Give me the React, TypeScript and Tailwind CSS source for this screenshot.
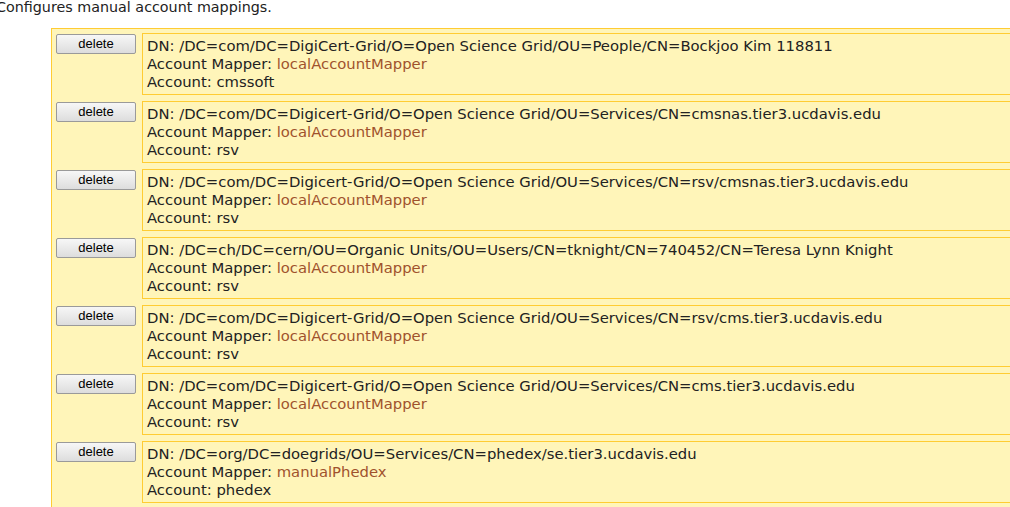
import React from 'react';

interface Mapping {
    dn: string;
    mapper: string;
    account: string;
}

const mappings: Mapping[] = [
    { dn: '/DC=com/DC=DigiCert-Grid/O=Open Science Grid/OU=People/CN=Bockjoo Kim 118811', mapper: 'localAccountMapper', account: 'cmssoft' },
    { dn: '/DC=com/DC=Digicert-Grid/O=Open Science Grid/OU=Services/CN=cmsnas.tier3.ucdavis.edu', mapper: 'localAccountMapper', account: 'rsv' },
    { dn: '/DC=com/DC=Digicert-Grid/O=Open Science Grid/OU=Services/CN=rsv/cmsnas.tier3.ucdavis.edu', mapper: 'localAccountMapper', account: 'rsv' },
    { dn: '/DC=ch/DC=cern/OU=Organic Units/OU=Users/CN=tknight/CN=740452/CN=Teresa Lynn Knight', mapper: 'localAccountMapper', account: 'rsv' },
    { dn: '/DC=com/DC=Digicert-Grid/O=Open Science Grid/OU=Services/CN=rsv/cms.tier3.ucdavis.edu', mapper: 'localAccountMapper', account: 'rsv' },
    { dn: '/DC=com/DC=Digicert-Grid/O=Open Science Grid/OU=Services/CN=cms.tier3.ucdavis.edu', mapper: 'localAccountMapper', account: 'rsv' },
    { dn: '/DC=org/DC=doegrids/OU=Services/CN=phedex/se.tier3.ucdavis.edu', mapper: 'manualPhedex', account: 'phedex' },
];

const App: React.FC = () => {
    return (
        <div className="w-[1010px] h-[507px] overflow-hidden bg-white text-[#222] font-['DejaVu_Sans',sans-serif] text-[14.8px] leading-[18px]">
            <p className="-ml-[4px] -mt-[2px] text-[14.3px]">Configures manual account mappings.</p>

            {/* Mapping list */}
            <div className="ml-[51px] mt-[12px] w-[1100px] border border-[#ffcc33] bg-[#fff5b9] pt-[4px] pl-[4px] pb-[4px] flex flex-col gap-[6px]">
                {mappings.map((m, i) => (
                    <div key={i} className="flex items-start gap-[6px]">
                        <button className="mt-[1px] w-[80px] h-[20px] shrink-0 rounded-[2px] border border-[#9a9a9a] bg-gradient-to-b from-[#f7f7f7] to-[#dddddd] font-['Liberation_Sans',sans-serif] text-[13px] leading-[18px] text-black">
                            delete
                        </button>
                        <div className="flex-1 border border-[#ffcc33] px-[4px] py-[3px]">
                            <div>DN: {m.dn}</div>
                            <div>Account Mapper: <span className="text-[#a0522d]">{m.mapper}</span></div>
                            <div>Account: {m.account}</div>
                        </div>
                    </div>
                ))}
            </div>
        </div>
    );
};

export default App;
